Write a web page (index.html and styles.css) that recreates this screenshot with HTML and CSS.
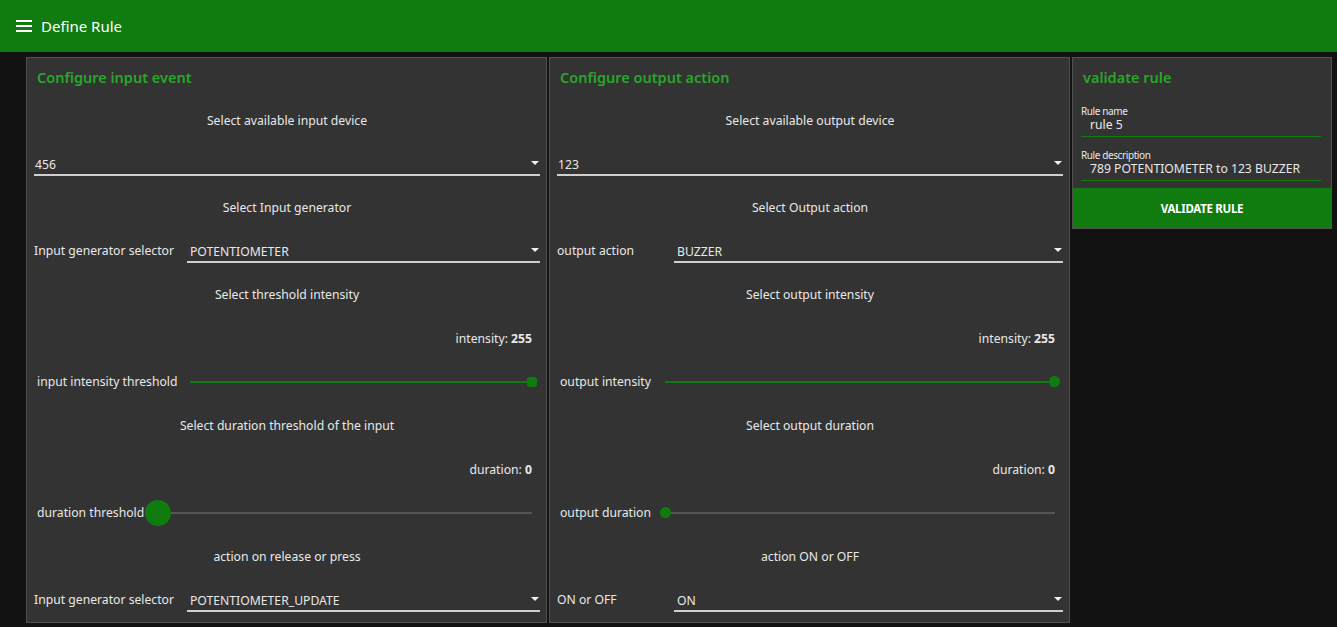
FILE: index.html
```html
<!DOCTYPE html>
<html>
<head>
<meta charset="utf-8">
<link rel="stylesheet" href="styles.css">
</head>
<body>
<header class="appbar">
  <svg class="menu-icon" width="16" height="12" viewBox="0 0 16 12"><rect x="0" y="0" width="16" height="2" fill="#fff"/><rect x="0" y="5" width="16" height="2" fill="#fff"/><rect x="0" y="10" width="16" height="2" fill="#fff"/></svg>
  <span class="appbar-title">Define Rule</span>
</header>
<main class="content">
  <section class="panel panel-main">
    <div class="title-row"><h2 class="panel-title">Configure input event</h2></div>
    <div class="row center">Select available input device</div>
    <div class="row"><div class="select select-full"><span>456</span><i class="caret"></i></div></div>
    <div class="row center">Select Input generator</div>
    <div class="row"><span class="field-label lbl-in">Input generator selector</span><div class="select"><span>POTENTIOMETER</span><i class="caret"></i></div></div>
    <div class="row center">Select threshold intensity</div>
    <div class="row right"><span>intensity: <b>255</b></span></div>
    <div class="row slider-row"><span class="slider-label sl-in1">input intensity threshold</span>
      <div class="slider"><div class="track filled"></div><div class="thumb thumb-square thumb-end"></div></div></div>
    <div class="row center">Select duration threshold of the input</div>
    <div class="row right"><span>duration: <b>0</b></span></div>
    <div class="row slider-row"><span class="slider-label sl-in2">duration threshold</span>
      <div class="slider slider-big"><div class="track"></div><div class="thumb thumb-big thumb-start"></div></div></div>
    <div class="row center">action on release or press</div>
    <div class="row"><span class="field-label lbl-in">Input generator selector</span><div class="select"><span>POTENTIOMETER_UPDATE</span><i class="caret"></i></div></div>
  </section>
  <section class="panel panel-main">
    <div class="title-row"><h2 class="panel-title">Configure output action</h2></div>
    <div class="row center">Select available output device</div>
    <div class="row"><div class="select select-full"><span>123</span><i class="caret"></i></div></div>
    <div class="row center">Select Output action</div>
    <div class="row"><span class="field-label lbl-out">output action</span><div class="select"><span>BUZZER</span><i class="caret"></i></div></div>
    <div class="row center">Select output intensity</div>
    <div class="row right"><span>intensity: <b>255</b></span></div>
    <div class="row slider-row"><span class="slider-label sl-out">output intensity</span>
      <div class="slider"><div class="track filled"></div><div class="thumb thumb-round thumb-end"></div></div></div>
    <div class="row center">Select output duration</div>
    <div class="row right"><span>duration: <b>0</b></span></div>
    <div class="row slider-row"><span class="slider-label sl-out">output duration</span>
      <div class="slider"><div class="track"></div><div class="thumb thumb-round thumb-start"></div></div></div>
    <div class="row center">action ON or OFF</div>
    <div class="row"><span class="field-label lbl-out">ON or OFF</span><div class="select"><span>ON</span><i class="caret"></i></div></div>
  </section>
  <section class="panel panel-side">
    <div class="title-row side-title"><h2 class="panel-title">validate rule</h2></div>
    <div class="text-field">
      <span class="tf-label">Rule name</span>
      <span class="tf-value">rule 5</span>
    </div>
    <div class="text-field">
      <span class="tf-label">Rule description</span>
      <span class="tf-value">789 POTENTIOMETER to 123 BUZZER</span>
    </div>
    <button class="validate-btn">VALIDATE RULE</button>
  </section>
</main>
</body>
</html>
```

FILE: styles.css
```css
* { box-sizing: border-box; }
html, body { margin: 0; padding: 0; }
body {
  background: #121212;
  color: #e8e8e8;
  font-family: "Noto Sans", "Open Sans", sans-serif;
  font-size: 12.2px;
  width: 1337px;
  height: 627px;
  overflow: hidden;
}
.appbar {
  height: 52px;
  background: #107c10;
  display: flex;
  align-items: center;
  padding-left: 16px;
  gap: 9px;
}
.menu-icon { display: block; }
.appbar-title {
  color: #fff;
  font-size: 15px;
  line-height: 1;
}
.content {
  display: flex;
  align-items: flex-start;
  gap: 2px;
  padding: 5px 0 0 26px;
}
.panel {
  background: #333333;
  border: 1px solid #505050;
}
.panel-main {
  width: 521px;
  height: 566px;
  display: flex;
  flex-direction: column;
}
.panel-side {
  width: 260px;
  display: flex;
  flex-direction: column;
}
.title-row {
  height: 40.2px;
  flex: none;
  display: flex;
  align-items: center;
  padding: 0 0 3px 10px;
}
.row {
  height: 43.64px;
  flex: none;
  display: flex;
  align-items: center;
  padding: 0 6px 0 7px;
  white-space: nowrap;
}
.panel-title {
  margin: 0;
  font-size: 14.5px;
  font-weight: 600;
  color: #29a629;
}
.center { justify-content: center; }
.right { justify-content: flex-end; padding-right: 14px; }
.right b { font-weight: 700; }
.field-label { flex: none; }
.lbl-in { width: 153px; }
.lbl-out { width: 117px; }
.select {
  flex: 1;
  height: 23px;
  display: flex;
  align-items: center;
  justify-content: space-between;
  border-bottom: 2px solid #cfcfcf;
  padding: 3px 0 0 3px;
  margin-top: 1px;
}
.select-full { padding-left: 1px; }
.caret {
  width: 0;
  height: 0;
  border-left: 4px solid transparent;
  border-right: 4px solid transparent;
  border-top: 4px solid #f0f0f0;
  margin-right: 1px;
  margin-top: -3px;
}
.slider-row { padding-left: 10px; padding-right: 14px; }
.slider-label { flex: none; }
.sl-in1 { width: 153px; }
.sl-in2 { width: 108px; }
.sl-out { width: 105px; }
.slider {
  flex: 1;
  height: 26px;
  position: relative;
  display: flex;
  align-items: center;
}
.track {
  width: 100%;
  height: 2px;
  background: #555555;
}
.track.filled { background: #107c10; }
.slider-big .track { margin-left: 13px; }
.thumb {
  position: absolute;
  top: 50%;
  background: #107c10;
}
.thumb-square {
  width: 10px;
  height: 10px;
  border-radius: 3px;
  margin-top: -5px;
}
.thumb-round {
  width: 11px;
  height: 11px;
  border-radius: 50%;
  margin-top: -5.5px;
}
.thumb-big {
  width: 26px;
  height: 26px;
  border-radius: 50%;
  margin-top: -13px;
}
.thumb-end { right: -5px; }
.thumb-round.thumb-start { left: -5px; }
.thumb-big.thumb-start { left: 0; }
.text-field {
  margin: 8px 10px 0 8px;
  display: flex;
  flex-direction: column;
  border-bottom: 1px solid #107c10;
  padding-bottom: 3px;
}
.text-field + .text-field { margin-top: 13px; }
.tf-label {
  font-size: 10px;
  line-height: 11px;
  letter-spacing: -0.4px;
}
.tf-value {
  font-size: 12.2px;
  line-height: 16px;
  padding-left: 9px;
}
.validate-btn {
  margin-top: 7px;
  height: 40px;
  border: none;
  background: #107c10;
  color: #fff;
  font-family: inherit;
  font-size: 11.5px;
  font-weight: 700;
  letter-spacing: -0.3px;
  width: 100%;
}
```
